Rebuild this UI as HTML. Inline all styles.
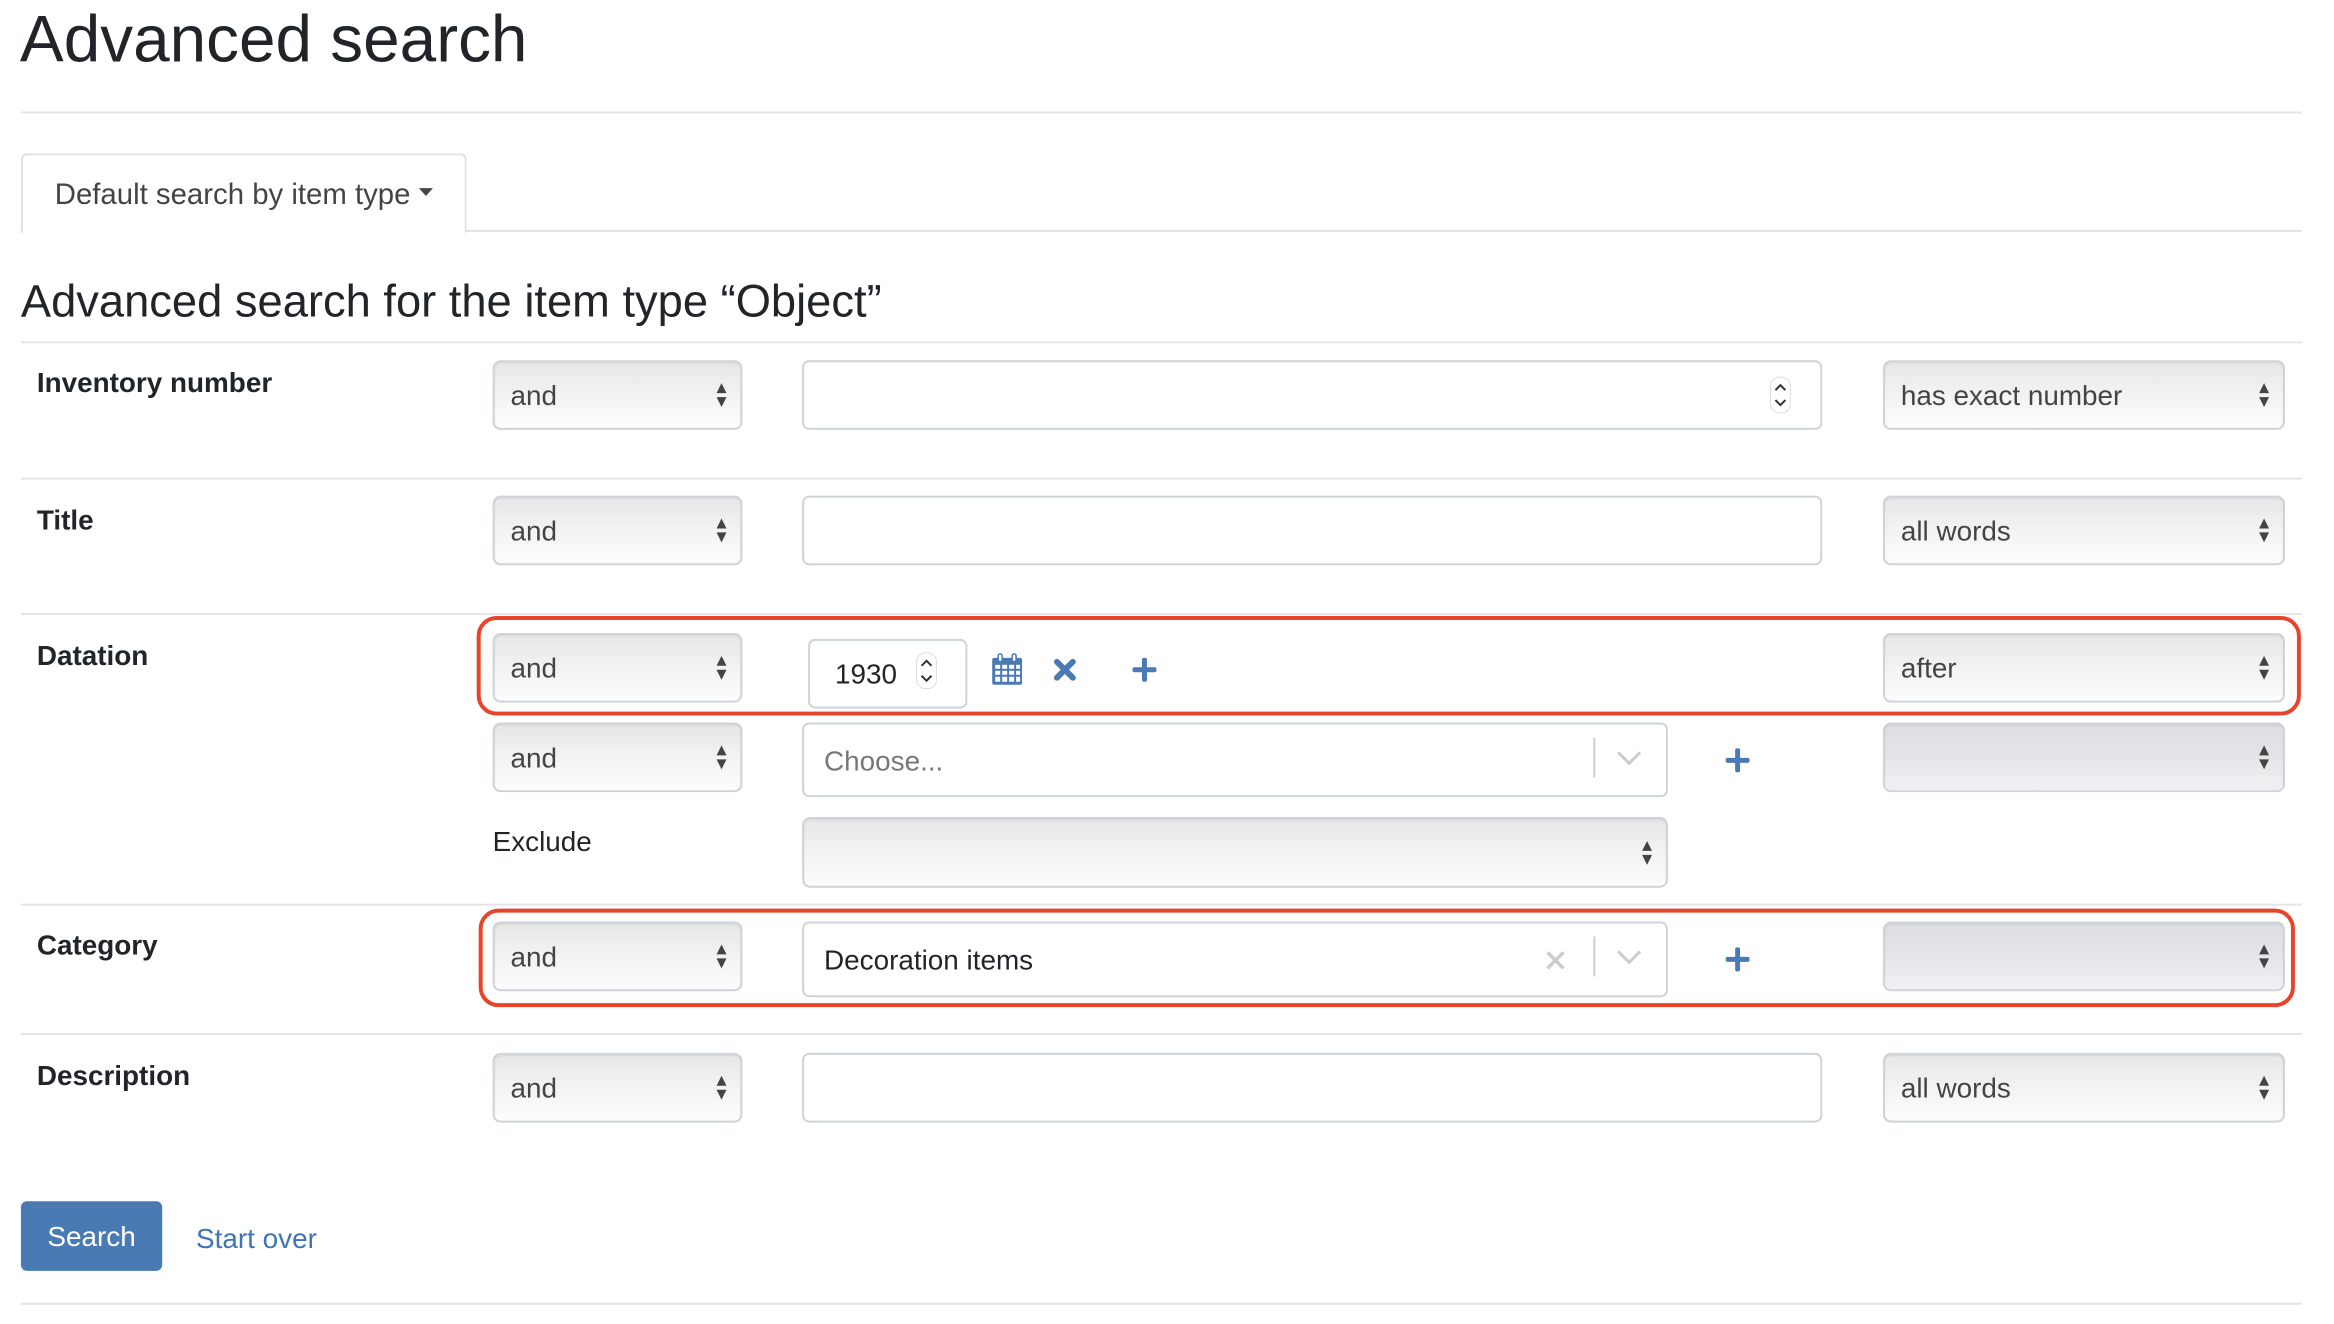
<!DOCTYPE html>
<html><head><meta charset="utf-8">
<style>
*{box-sizing:border-box;margin:0;padding:0}
body{width:2334px;height:1324px;background:#fff;font-family:"Liberation Sans",Arial,sans-serif;color:#212529;position:relative;overflow:hidden}
#w{position:absolute;left:0;top:0;width:2345px;height:1330px;transform:scale(0.9952);transform-origin:0 0}
.a{position:absolute}
.hr{position:absolute;left:21px;width:2292px;height:2px;background:#e3e5e8}
.lbl{position:absolute;left:37px;font-weight:bold;font-size:28px;line-height:1}
.sel{position:absolute;border:2px solid #cfd3d8;border-radius:8px;background:linear-gradient(#e6e6e6,#f3f3f3 50%,#fcfcfc);box-shadow:inset 0 1px 2px rgba(0,0,0,.08);font-size:28px;color:#444;padding-left:16px;padding-top:2px;display:flex;align-items:center}
.sel.dis{background:linear-gradient(#dcdde0,#e4e5e8 50%,#f1f1f3)}
.sel .ar{position:absolute;right:12px;top:50%;margin-top:-14px;width:14px;height:28px}
.inp{position:absolute;border:2px solid #ced4da;border-radius:7px;background:#fff;font-size:28px;display:flex;align-items:center;padding-left:20px;padding-top:2px}
.red{position:absolute;border:4px solid #e8442c;border-radius:20px}
</style></head><body><div id="w">
<div class="a" style="left:20px;top:3px;font-size:66px;line-height:72px;color:#212529">Advanced search</div>
<div class="hr" style="top:112px"></div>
<div class="a" style="left:21px;top:154px;width:448px;height:80px;border:2px solid #dee2e6;border-bottom:none;border-radius:6px 6px 0 0;background:#fff;z-index:2"></div>
<div class="a" style="left:21px;top:231px;width:2292px;height:2px;background:#dee2e6"></div>
<div class="a" style="left:55px;top:179px;font-size:29.5px;color:#444;z-index:3">Default search by item type <span style="display:inline-block;border-left:7px solid transparent;border-right:7px solid transparent;border-top:8px solid #444;vertical-align:middle;position:relative;top:-4px"></span></div>
<div class="a" style="left:21px;top:275px;font-size:45.5px;line-height:56px">Advanced search for the item type “Object”</div>
<div class="hr" style="top:343px"></div>
<div class="hr" style="top:480px"></div>
<div class="hr" style="top:616px"></div>
<div class="hr" style="top:908px"></div>
<div class="hr" style="top:1038px"></div>
<div class="hr" style="top:1309px"></div>

<div class="lbl" style="top:371px">Inventory number</div>
<div class="lbl" style="top:509px">Title</div>
<div class="lbl" style="top:645px">Datation</div>
<div class="lbl" style="top:936px">Category</div>
<div class="lbl" style="top:1067px">Description</div>
<div class="a" style="left:495px;top:830px;font-size:28px">Exclude</div>

<svg width="0" height="0" style="position:absolute"><defs><symbol id="ar" viewBox="0 0 14 28"><path d="M7 2 L12 12 H2Z M2 16 H12 L7 26Z" fill="#444"/></symbol></defs></svg>

<div class="sel" style="left:495px;top:362px;width:251px;height:70px">and<svg class="ar"><use href="#ar"/></svg></div>
<div class="sel" style="left:495px;top:498px;width:251px;height:70px">and<svg class="ar"><use href="#ar"/></svg></div>
<div class="sel" style="left:495px;top:636px;width:251px;height:70px">and<svg class="ar"><use href="#ar"/></svg></div>
<div class="sel" style="left:495px;top:726px;width:251px;height:70px">and<svg class="ar"><use href="#ar"/></svg></div>
<div class="sel" style="left:495px;top:926px;width:251px;height:70px">and<svg class="ar"><use href="#ar"/></svg></div>
<div class="sel" style="left:495px;top:1058px;width:251px;height:70px">and<svg class="ar"><use href="#ar"/></svg></div>

<div class="sel" style="left:1892px;top:362px;width:404px;height:70px">has exact number<svg class="ar"><use href="#ar"/></svg></div>
<div class="sel" style="left:1892px;top:498px;width:404px;height:70px">all words<svg class="ar"><use href="#ar"/></svg></div>
<div class="sel" style="left:1892px;top:636px;width:404px;height:70px">after<svg class="ar"><use href="#ar"/></svg></div>
<div class="sel dis" style="left:1892px;top:726px;width:404px;height:70px"><svg class="ar"><use href="#ar"/></svg></div>
<div class="sel dis" style="left:1892px;top:926px;width:404px;height:70px"><svg class="ar"><use href="#ar"/></svg></div>
<div class="sel" style="left:1892px;top:1058px;width:404px;height:70px">all words<svg class="ar"><use href="#ar"/></svg></div>
<div class="sel" style="left:806px;top:821px;width:870px;height:71px"><svg class="ar"><use href="#ar"/></svg></div>

<div class="inp" style="left:806px;top:362px;width:1025px;height:70px"></div>
<svg class="a" style="left:1778px;top:378px" width="22" height="38"><rect x="1" y="1" width="20" height="36" rx="9" fill="#fff" stroke="#ddd"/><path d="M6 14 L11 9 L16 14 M6 24 L11 29 L16 24" fill="none" stroke="#333" stroke-width="2"/></svg>
<div class="inp" style="left:806px;top:498px;width:1025px;height:70px"></div>
<div class="inp" style="left:806px;top:1058px;width:1025px;height:70px"></div>

<div class="inp" style="left:812px;top:642px;width:160px;height:70px;padding-left:25px">1930</div>
<svg class="a" style="left:920px;top:655px" width="22" height="38"><rect x="1" y="1" width="20" height="36" rx="9" fill="#fff" stroke="#ddd"/><path d="M6 14 L11 9 L16 14 M6 24 L11 29 L16 24" fill="none" stroke="#333" stroke-width="2"/></svg>

<svg class="a" style="left:996px;top:656px" width="32" height="33" viewBox="0 0 32 33"><rect x="1" y="5" width="30" height="27" rx="2" fill="#4a7ab3"/><g fill="#fff"><rect x="4" y="12" width="5" height="4"/><rect x="11" y="12" width="5" height="4"/><rect x="18" y="12" width="5" height="4"/><rect x="25" y="12" width="4" height="4"/><rect x="4" y="18" width="5" height="4"/><rect x="11" y="18" width="5" height="4"/><rect x="18" y="18" width="5" height="4"/><rect x="25" y="18" width="4" height="4"/><rect x="4" y="24" width="5" height="5"/><rect x="11" y="24" width="5" height="5"/><rect x="18" y="24" width="5" height="5"/><rect x="25" y="24" width="4" height="5"/></g><rect x="7" y="1" width="4" height="8" rx="2" fill="#fff" stroke="#4a7ab3" stroke-width="1.5"/><rect x="21" y="1" width="4" height="8" rx="2" fill="#fff" stroke="#4a7ab3" stroke-width="1.5"/></svg>
<svg class="a" style="left:1058px;top:662px" width="24" height="22"><path d="M4 3 L20 19 M20 3 L4 19" stroke="#4a7ab3" stroke-width="6" stroke-linecap="round"/></svg>
<svg class="a" style="left:1138px;top:661px" width="24" height="24"><path d="M12 2 V22 M2 12 H22" stroke="#4a7ab3" stroke-width="5" stroke-linecap="round"/></svg>

<div class="inp" style="left:806px;top:726px;width:870px;height:75px;color:#777">Choose...</div>
<div class="a" style="left:1601px;top:741px;width:2px;height:40px;background:#ccc"></div>
<svg class="a" style="left:1624px;top:753px" width="26" height="18"><path d="M2 3 L13 14 L24 3" fill="none" stroke="#ccc" stroke-width="3"/></svg>
<svg class="a" style="left:1734px;top:752px" width="24" height="24"><path d="M12 2 V22 M2 12 H22" stroke="#4a7ab3" stroke-width="5" stroke-linecap="round"/></svg>

<div class="inp" style="left:806px;top:926px;width:870px;height:76px">Decoration items</div>
<svg class="a" style="left:1552px;top:954px" width="22" height="22"><path d="M3 3 L19 19 M19 3 L3 19" stroke="#ccc" stroke-width="3.5"/></svg>
<div class="a" style="left:1601px;top:941px;width:2px;height:40px;background:#ccc"></div>
<svg class="a" style="left:1624px;top:953px" width="26" height="18"><path d="M2 3 L13 14 L24 3" fill="none" stroke="#ccc" stroke-width="3"/></svg>
<svg class="a" style="left:1734px;top:952px" width="24" height="24"><path d="M12 2 V22 M2 12 H22" stroke="#4a7ab3" stroke-width="5" stroke-linecap="round"/></svg>

<div class="red" style="left:479px;top:619px;width:1833px;height:100px"></div>
<div class="red" style="left:481px;top:913px;width:1825px;height:99px"></div>

<div class="a" style="left:21px;top:1207px;width:142px;height:70px;background:#4a7ab3;border-radius:6px;color:#fff;font-size:28px;padding-top:2px;display:flex;align-items:center;justify-content:center">Search</div>
<div class="a" style="left:197px;top:1229px;font-size:28px;color:#3f74b5">Start over</div>
</div></body></html>
